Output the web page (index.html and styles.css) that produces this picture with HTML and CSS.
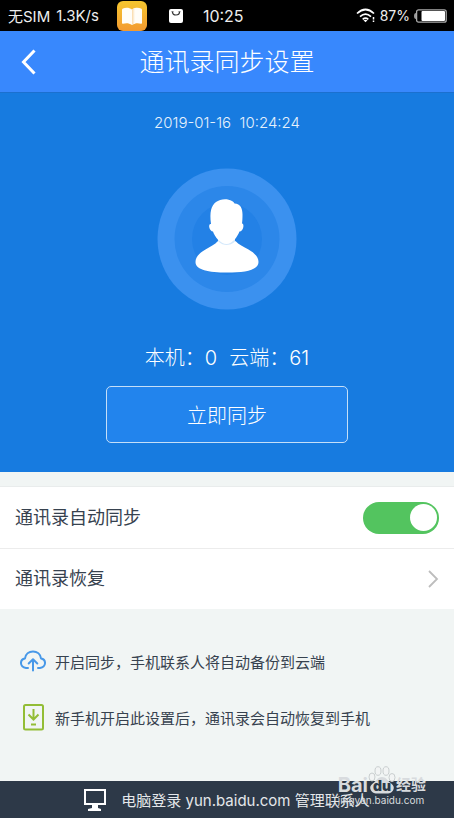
FILE: index.html
```html
<!DOCTYPE html>
<html lang="zh-CN">
<head>
<meta charset="utf-8">
<meta name="viewport" content="width=device-width, initial-scale=1">
<title>通讯录同步设置</title>
<link rel="stylesheet" href="styles.css">
</head>
<body>
<div class="screen">
  <div class="status">
    <div class="status-side">
      <span>无SIM</span>
      <span class="speed">1.3K/s</span>
      <svg class="app-icon" width="30" height="30" viewBox="0 0 30 30" aria-hidden="true">
        <defs>
          <linearGradient id="gold" x1="0" y1="0" x2="0" y2="1"><stop offset="0" stop-color="#f5c62f"/><stop offset="1" stop-color="#f39a30"/></linearGradient>
          <linearGradient id="page" x1="0" y1="0" x2="1" y2="0"><stop offset="0" stop-color="#f9d9a8"/><stop offset="1" stop-color="#fffdf8"/></linearGradient>
        </defs>
        <rect width="30" height="30" rx="6" fill="url(#gold)"/>
        <path d="M15 8.500c-2.500-2-6.500-2-9-1q-1 .4-1 1.500v13q0 1 1 .8c3-.8 6-.8 9 1.200z" fill="#fffdf8"/>
        <path d="M15 8.500c2.500-2 6.500-2 9-1q1 .4 1 1.500v13q0 1-1 .8c-3-.8-6-.8-9 1.200z" fill="#fffdf8"/>
        <path d="M15 8.500q1.500-1.200 3-1.500v15.500q-1.500.4-3 1.500z" fill="url(#page)"/>
      </svg>
      <svg class="bag-icon" width="14" height="14" viewBox="0 0 14 14" aria-hidden="true">
        <rect width="14" height="14" rx="2" fill="#fff"/>
        <path d="M3.500 3q0 3 3.500 3t3.500-3" fill="none" stroke="#333" stroke-width="1.200"/>
        <path d="M2.500 2.700h2M9.500 2.700h2" stroke="#333" stroke-width=".8"/>
      </svg>
      <span class="clock">10:25</span>
    </div>
    <div class="status-side status-right">
      <svg width="20" height="15" viewBox="0 0 20 15" aria-hidden="true">
        <g fill="none" stroke="#fff" stroke-width="1.700">
          <path d="M1 5.500q8.500-8 17 0M4 8.700q5.500-5 11 0M6.700 11.300q2.800-2.300 5.600 0"/>
        </g>
        <path d="M7.500 12.300q2-1.300 4 0l-2 2z" fill="#fff"/>
        <path d="M17.500 9v2.500M17.500 12.500v1.500" stroke="#fff" stroke-width="1.500"/>
      </svg>
      <span>87%</span>
      <svg class="battery" width="33" height="14" viewBox="0 0 33 14" aria-hidden="true">
        <path d="M2 4q-2 0-2 3t2 3z" fill="#999"/>
        <rect x="2.600" y=".8" width="29.600" height="12.400" rx="2" fill="none" stroke="#aaa" stroke-width="1.300"/>
        <rect x="7.500" y="2" width="23.500" height="10" rx="1" fill="#fff"/>
      </svg>
    </div>
  </div>

  <header class="bar">
    <button class="back" type="button" aria-label="返回">
      <svg width="18" height="28" viewBox="0 0 18 28" aria-hidden="true"><path d="M14.500 2.500 3.500 14l11 11.500" fill="none" stroke="#fff" stroke-width="3"/></svg>
    </button>
    <h1>通讯录同步设置</h1>
  </header>

  <section class="hero">
    <time class="date" datetime="2019-01-16T10:24:24">2019-01-16&nbsp; 10:24:24</time>
    <svg class="avatar" width="140" height="142" viewBox="0 0 140 142" aria-hidden="true">
      <ellipse cx="70" cy="71" rx="69.500" ry="70.500" fill="#3b91ef"/>
      <ellipse cx="70" cy="71" rx="52.500" ry="53" fill="#2c87e9"/>
      <ellipse cx="70" cy="71" rx="35" ry="36" fill="#2381e6"/>
      <path d="M61 66h17v11l-8 3-9-3z" fill="#d5e9fb"/>
      <path d="M61 73c3 3 6 4 8.500 4s6-1 9-4c3 3.500 8 5.500 13 8.500 6 3.500 10 7.500 10 12.500 0 8-13 10.500-31.500 10.500S38.500 102 38.500 94c0-5 4-9 10-12.500 4.500-3 9.500-5 12.500-8.500z" fill="#fff"/>
      <path d="M54 56c-1.500-12 0-18 5-22 4-3 11-4 16-1 1 .6 2 1.500 2.500 2.500 6 0 8 5 8 11 0 3.500-.1 6.500-.5 9 2.700 0 1.500 8-2.500 8-2 5-7 12.500-13 12.500s-12-7.500-13.500-12.500c-3.500 0-5.500-8-2-7.500z" fill="#fff"/>
    </svg>
    <p class="counts"><span>本机：0</span><span>云端：61</span></p>
    <button class="sync" type="button">立即同步</button>
  </section>

  <section class="list">
    <label class="row" for="auto-sync">
      <span>通讯录自动同步</span>
      <input class="switch" type="checkbox" role="switch" id="auto-sync" checked>
    </label>
    <a class="row" href="#restore">
      <span>通讯录恢复</span>
      <svg width="12" height="20" viewBox="0 0 12 20" aria-hidden="true"><path d="m2 2 8 8-8 8" fill="none" stroke="#bdbdbd" stroke-width="1.800"/></svg>
    </a>
  </section>

  <ul class="tips">
    <li>
      <svg width="26" height="22" viewBox="0 0 26 22" aria-hidden="true">
        <g fill="none" stroke="#4798e8" stroke-width="2" stroke-linecap="round" stroke-linejoin="round">
          <path d="M8 18H6C-.5 17-.5 9.500 5 8.500 5.500 4 9 1.500 13 1.500s7.500 2.500 8 7c5.500 1 5.500 8.500-1 9.500h-2"/>
          <path d="M13 20.500v-11M8.700 13.500 13 9.300l4.300 4.200"/>
        </g>
      </svg>
      <span>开启同步，手机联系人将自动备份到云端</span>
    </li>
    <li>
      <svg width="26" height="28" viewBox="0 0 26 28" aria-hidden="true">
        <g fill="none" stroke="#93bd35" stroke-width="2">
          <rect x="4" y="2" width="19" height="24.500" rx="1.500"/>
          <path d="M13.500 6v10.500M8.500 11.500l5 5 5-5M11 21.500h5"/>
        </g>
      </svg>
      <span>新手机开启此设置后，通讯录会自动恢复到手机</span>
    </li>
  </ul>

  <footer class="foot">
    <svg width="22" height="22" viewBox="0 0 22 22" aria-hidden="true">
      <path d="M0 0h22v16H0zM2 2v12h18V2z" fill="#fff" fill-rule="evenodd"/>
      <path d="M8 16h6v3l3 1v2H4v-2l4-1z" fill="#fff"/>
    </svg>
    <span>电脑登录 yun.baidu.com 管理联系人</span>
    <div class="mark">
      <div class="mark-top">
        <span>Bai</span>
        <span class="paw">
          <svg width="28" height="28" viewBox="0 0 28 28" aria-hidden="true">
            <g fill="#f2f4f4" stroke="#c9cecf" stroke-width="1">
              <ellipse cx="4" cy="11" rx="3" ry="4"/><ellipse cx="10" cy="5" rx="3" ry="4.300"/>
              <ellipse cx="18" cy="5" rx="3" ry="4.300"/><ellipse cx="24" cy="11.500" rx="3" ry="4"/>
            </g>
            <path d="M14 11c4 0 5 3 8 5.500s5 4 3 8-7 3-11 3-9 1-11-3 0-5.500 3-8S10 11 14 11z" fill="#d8dbde"/>
          </svg>
          <b>du</b>
        </span>
        <span class="mark-cn">经验</span>
      </div>
      <div class="mark-url">jingyan.baidu.com</div>
    </div>
  </footer>
</div>
</body>
</html>
```
FILE: styles.css
```css
* { box-sizing: border-box; }

body {
  margin: 0;
  background: #f1f5f4;
  color: #37424f;
  font-family: Inter, "Noto Sans CJK SC", sans-serif;
  font-size: 15px;
}

h1, p, ul { margin: 0; padding: 0; font-weight: 400; }
button { font: inherit; color: inherit; cursor: pointer; }
svg { display: block; flex: none; }

.screen {
  min-height: 100vh;
  display: flex;
  flex-direction: column;
}

.status {
  height: 31px;
  padding: 0 7px 0 8px;
  display: flex;
  justify-content: space-between;
  align-items: center;
  background: #000;
  color: #eee;
  font-size: 15px;
  white-space: nowrap;
}
.status-side { display: flex; align-items: center; gap: 6px; }
.status-right { gap: 4px; font-size: 14px; }
.app-icon { margin-left: 12px; }
.bag-icon { margin-left: 16px; }
.clock { margin-left: 14px; font-size: 16px; }

.bar {
  height: 61px;
  display: grid;
  grid-template-columns: 56px 1fr 56px;
  align-items: center;
  background: #3888fd;
  color: #fff;
}
.back {
  padding: 0 0 0 20px;
  border: 0;
  background: none;
}
.bar h1 { font-size: 25px; line-height: 36px; font-weight: 300; text-align: center; }

.hero {
  padding: 20px 24px 29px;
  border-top: 1px solid #1b70cf;
  display: flex;
  flex-direction: column;
  align-items: center;
  background: #177be0;
  color: #fff;
}
.date { font-size: 15px; line-height: 20px; font-weight: 300; color: #e6f1fc; }
.avatar { margin-top: 35px; }
.counts {
  margin-top: 33px;
  display: flex;
  gap: 12px;
  font-size: 20px;
  line-height: 30px;
  font-weight: 300;
}
.sync {
  width: 100%;
  max-width: 242px;
  height: 57px;
  margin-top: 13px;
  border: 1px solid #c5dff8;
  border-radius: 5px;
  background: #2284ed;
  font-size: 20px;
  font-weight: 300;
}

.list {
  margin-top: 14px;
  border-top: 1px solid #e9ecec;
  background: #fff;
}
.row {
  height: 61px;
  padding: 0 15px;
  display: flex;
  justify-content: space-between;
  align-items: center;
  color: inherit;
  font-size: 18px;
  line-height: 24px;
  text-decoration: none;
}
.row + .row { border-top: 1px solid #ececec; }

.switch {
  appearance: none;
  width: 76px;
  height: 32px;
  margin: 0;
  padding: 2px;
  border-radius: 16px;
  background: #53c45f;
  display: flex;
  align-items: center;
  justify-content: flex-end;
}
.switch::before {
  content: "";
  width: 27px;
  height: 27px;
  border-radius: 50%;
  background: #fff;
}
.switch:not(:checked) { background: #ccc; justify-content: flex-start; }

.tips {
  padding: 38px 20px 20px;
  display: flex;
  flex-direction: column;
  gap: 28px;
  list-style: none;
}
.tips li {
  min-height: 28px;
  display: flex;
  align-items: center;
  gap: 9px;
}

.foot {
  position: relative;
  height: 37px;
  margin-top: auto;
  display: flex;
  justify-content: center;
  align-items: center;
  gap: 15px;
  background: #2d3948;
  color: #e4e7ea;
  white-space: nowrap;
}

.mark {
  position: absolute;
  right: 28px;
  bottom: 12px;
  color: #d8dbde;
}
.mark-top {
  display: flex;
  align-items: flex-end;
  font-size: 20px;
  line-height: 18px;
  font-weight: 700;
}
.paw { display: grid; align-items: end; justify-items: center; }
.paw > * { grid-area: 1 / 1; }
.paw b { font-size: 14px; line-height: 16px; color: #2d3948; }
.mark-cn { font-size: 15px; }
.mark-url { font-size: 10px; line-height: 12px; }
```
